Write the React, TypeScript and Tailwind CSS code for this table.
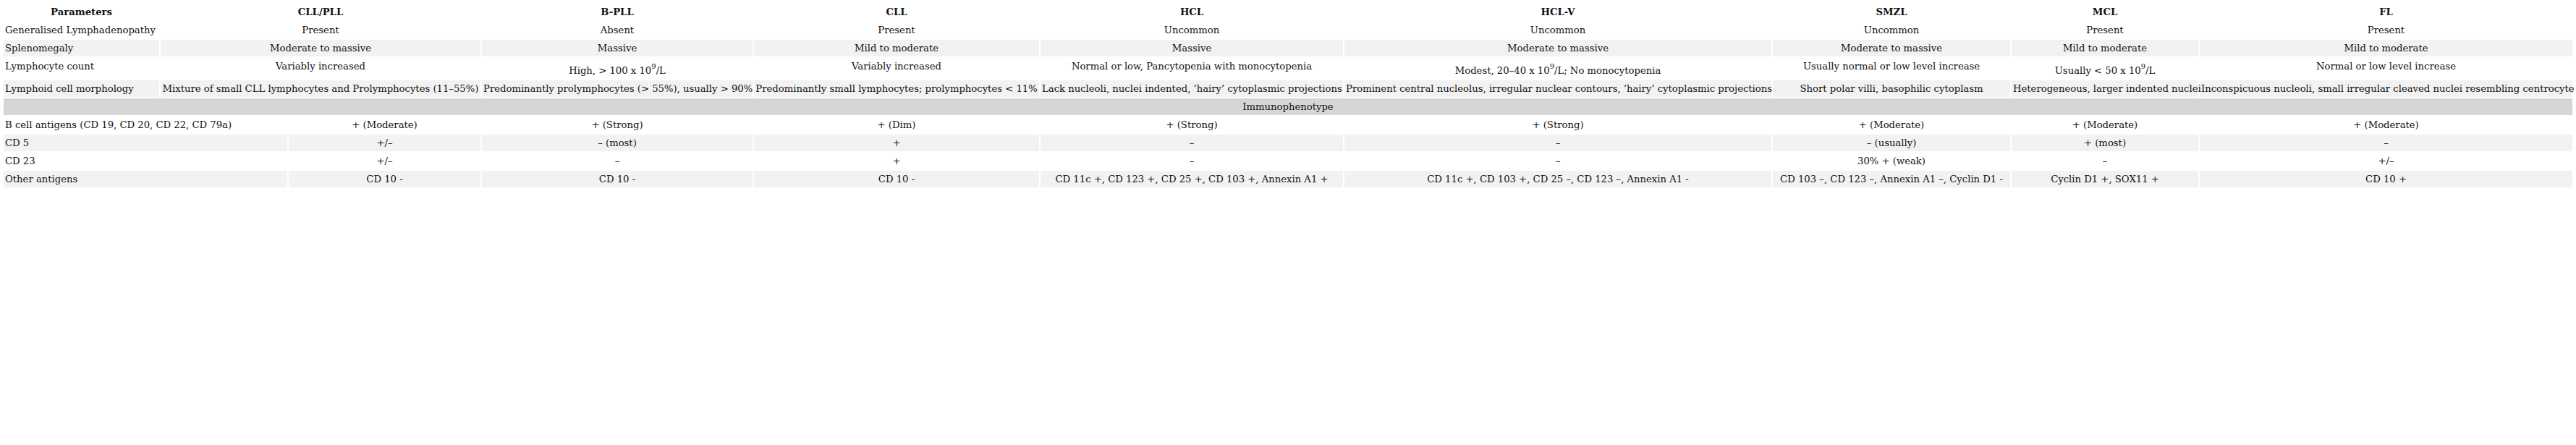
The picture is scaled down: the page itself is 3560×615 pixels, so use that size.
import React from "react";

const diseases = ["CLL/PLL", "B-PLL", "CLL", "HCL", "HCL-V", "SMZL", "MCL", "FL"];

function Pow() {
  return (
    <>
      10<sup className="top-0 align-[7px] text-[10px] leading-[21px]">9</sup>/L
    </>
  );
}

interface Row {
  label: string;
  values: React.ReactNode[];
}

const clinical: Row[] = [
  {
    label: "Generalised Lymphadenopathy",
    values: ["Present", "Absent", "Present", "Uncommon", "Uncommon", "Uncommon", "Present", "Present"]
  },
  {
    label: "Splenomegaly",
    values: [
      "Moderate to massive",
      "Massive",
      "Mild to moderate",
      "Massive",
      "Moderate to massive",
      "Moderate to massive",
      "Mild to moderate",
      "Mild to moderate"
    ]
  },
  {
    label: "Lymphocyte count",
    values: [
      "Variably increased",
      <>High, &gt; 100 x <Pow /></>,
      "Variably increased",
      "Normal or low, Pancytopenia with monocytopenia",
      <>Modest, 20–40 x <Pow />; No monocytopenia</>,
      "Usually normal or low level increase",
      <>Usually &lt; 50 x <Pow /></>,
      "Normal or low level increase"
    ]
  },
  {
    label: "Lymphoid cell morphology",
    values: [
      "Mixture of small CLL lymphocytes and Prolymphocytes (11–55%)",
      "Predominantly prolymphocytes (> 55%), usually > 90%",
      "Predominantly small lymphocytes; prolymphocytes < 11%",
      "Lack nucleoli, nuclei indented, \u2018hairy\u2019 cytoplasmic projections",
      "Prominent central nucleolus, irregular nuclear contours, \u2018hairy\u2019 cytoplasmic projections",
      "Short polar villi, basophilic cytoplasm",
      "Heterogeneous, larger indented nuclei",
      "Inconspicuous nucleoli, small irregular cleaved nuclei resembling centrocyte"
    ]
  }
];

const immuno: Row[] = [
  {
    label: "B cell antigens (CD 19, CD 20, CD 22, CD 79a)",
    values: [
      "+ (Moderate)",
      "+ (Strong)",
      "+ (Dim)",
      "+ (Strong)",
      "+ (Strong)",
      "+ (Moderate)",
      "+ (Moderate)",
      "+ (Moderate)"
    ]
  },
  {
    label: "CD 5",
    values: ["+/–", "– (most)", "+", "–", "–", "– (usually)", "+ (most)", "–"]
  },
  {
    label: "CD 23",
    values: ["+/–", "–", "+", "–", "–", "30% + (weak)", "–", "+/–"]
  },
  {
    label: "Other antigens",
    values: [
      "CD 10 -",
      "CD 10 -",
      "CD 10 -",
      "CD 11c +, CD 123 +, CD 25 +, CD 103 +, Annexin A1 +",
      "CD 11c +, CD 103 +, CD 25 –, CD 123 –, Annexin A1 -",
      "CD 103 –, CD 123 –, Annexin A1 –, Cyclin D1 -",
      "Cyclin D1 +, SOX11 +",
      "CD 10 +"
    ]
  }
];

const cell = "px-[2px] py-px align-top whitespace-nowrap";

export default function App() {
  return (
    <div className="bg-white p-[3px] font-['DejaVu_Serif',serif] text-[13.2px] leading-[21px] text-[#111]">
      <table className="w-[3554px] table-fixed border-separate border-spacing-[2px]">
        <colgroup>
          <col className="w-[215px]" />
          <col className="w-[175px]" />
          <col className="w-[265px]" />
          <col className="w-[374px]" />
          <col className="w-[394px]" />
          <col className="w-[418px]" />
          <col className="w-[590px]" />
          <col className="w-[328px]" />
          <col className="w-[258px]" />
          <col className="w-[515px]" />
        </colgroup>
        <thead>
          <tr>
            <th className={`${cell} text-center font-bold`}>Parameters</th>
            {diseases.map((d, i) => (
              <th key={d} colSpan={i === 0 ? 2 : 1} className={`${cell} text-center font-bold`}>
                {d}
              </th>
            ))}
          </tr>
        </thead>
        <tbody>
          {clinical.map((row, r) => (
            <tr key={row.label} className={r % 2 === 1 ? "bg-[#f2f2f2]" : ""}>
              <td className={`${cell} text-left`}>{row.label}</td>
              {row.values.map((v, i) => (
                <td key={i} colSpan={i === 0 ? 2 : 1} className={`${cell} text-center`}>
                  {v}
                </td>
              ))}
            </tr>
          ))}
          <tr className="bg-[#d6d6d6]">
            <td colSpan={10} className={`${cell} text-center`}>
              Immunophenotype
            </td>
          </tr>
          {immuno.map((row, r) => (
            <tr key={row.label} className={r % 2 === 1 ? "bg-[#f2f2f2]" : ""}>
              <td colSpan={2} className={`${cell} text-left`}>
                {row.label}
              </td>
              {row.values.map((v, i) => (
                <td key={i} className={`${cell} text-center`}>
                  {v}
                </td>
              ))}
            </tr>
          ))}
        </tbody>
      </table>
    </div>
  );
}
